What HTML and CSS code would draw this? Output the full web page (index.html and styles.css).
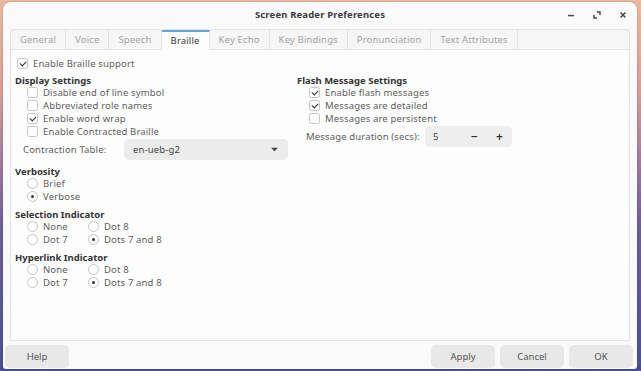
FILE: index.html
```
<!DOCTYPE html>
<html lang="en">
<head>
  <meta charset="UTF-8" />
  <title>Screen Reader Preferences</title>
  <link rel="stylesheet" href="styles.css">
</head>
<body>
  <div class="window">
    <div class="titlebar">
      <span></span>
      <h1>Screen Reader Preferences</h1>
      <div class="controls">
        <svg class="ctl" viewBox="0 0 10 10"><path d="M2.5 5.5h5" /></svg>
        <svg class="ctl" viewBox="0 0 10 10"><path d="M2.5 5v2.5h2.5M5 2.5h2.5v2.5" /></svg>
        <svg class="ctl" viewBox="0 0 10 10"><path d="M3 3l4 4M7 3l-4 4" /></svg>
      </div>
    </div>

    <div class="tabs">
      <div class="tab">General</div>
      <div class="tab">Voice</div>
      <div class="tab">Speech</div>
      <div class="tab active">Braille</div>
      <div class="tab">Key Echo</div>
      <div class="tab">Key Bindings</div>
      <div class="tab">Pronunciation</div>
      <div class="tab">Text Attributes</div>
      <div class="tab-fill"></div>
    </div>

    <div class="page">
      <label class="row top-check"><span class="check on"></span>Enable Braille support</label>

      <div class="columns">
        <div class="col">
          <h2>Display Settings</h2>
          <div class="group">
            <label class="row"><span class="check"></span>Disable end of line symbol</label>
            <label class="row"><span class="check"></span>Abbreviated role names</label>
            <label class="row"><span class="check on"></span>Enable word wrap</label>
            <label class="row"><span class="check"></span>Enable Contracted Braille</label>
          </div>
          <div class="combo-row">
            <span class="combo-label">Contraction Table:</span>
            <div class="combo">
              <span>en-ueb-g2</span>
              <svg viewBox="0 0 8 8"><path d="M1 2.5h6L4 5.5z" /></svg>
            </div>
          </div>

          <h2 class="spaced">Verbosity</h2>
          <div class="group">
            <label class="row"><span class="radio"></span>Brief</label>
            <label class="row"><span class="radio on"></span>Verbose</label>
          </div>

          <h2 class="spaced">Selection Indicator</h2>
          <div class="group radios">
            <label class="row"><span class="radio"></span>None</label>
            <label class="row"><span class="radio"></span>Dot 8</label>
            <label class="row"><span class="radio"></span>Dot 7</label>
            <label class="row"><span class="radio on"></span>Dots 7 and 8</label>
          </div>

          <h2 class="spaced">Hyperlink Indicator</h2>
          <div class="group radios">
            <label class="row"><span class="radio"></span>None</label>
            <label class="row"><span class="radio"></span>Dot 8</label>
            <label class="row"><span class="radio"></span>Dot 7</label>
            <label class="row"><span class="radio on"></span>Dots 7 and 8</label>
          </div>
        </div>

        <div class="col">
          <h2>Flash Message Settings</h2>
          <div class="group">
            <label class="row"><span class="check on"></span>Enable flash messages</label>
            <label class="row"><span class="check on"></span>Messages are detailed</label>
            <label class="row"><span class="check"></span>Messages are persistent</label>
          </div>
          <div class="spin-row">
            <span class="spin-label">Message duration (secs):</span>
            <div class="spin">
              <span class="spin-value">5</span>
              <span class="spin-btn">&minus;</span>
              <span class="spin-btn">+</span>
            </div>
          </div>
        </div>
      </div>
    </div>

    <div class="actions">
      <button>Help</button>
      <span class="spacer"></span>
      <button>Apply</button>
      <button>Cancel</button>
      <button>OK</button>
    </div>
  </div>
</body>
</html>
```

FILE: styles.css
```
/* Reset & base */
* { box-sizing: border-box; margin: 0; padding: 0; }
html, body { height: 100%; }
body {
  font-family: 'Noto Sans', 'DejaVu Sans', sans-serif;
  font-size: 9.5px;
  letter-spacing: 0.15px;
  color: #5e5e5e;
  background: linear-gradient(to bottom, #ebb9a2 0%, #d79c95 25%, #6d5f9c 60%, #4b4f8f 100%);
  overflow: hidden;
}

/* Window frame */
.window {
  display: flex; flex-direction: column;
  height: 367px;
  margin: 2px 4px 0 3px;
  background: #fafafa;
  border-radius: 8px 8px 3px 3px;
  box-shadow: 0 0 0 1px rgba(0,0,0,0.08);
}

/* Title bar */
.titlebar {
  display: grid; grid-template-columns: 1fr auto 1fr;
  align-items: center;
  height: 27px;
  padding-bottom: 2px;
}
.titlebar h1 { font-size: 9.5px; font-weight: 700; color: #3a3a3a; }
.controls { display: flex; justify-content: flex-end; gap: 14px; padding-right: 8px; }
.ctl { width: 12px; height: 12px; fill: none; stroke: #444; stroke-width: 1.2; }

/* Tabs */
.tabs {
  display: flex; height: 21px;
  margin: 0 7px;
  border: 1px solid #e4e4e4; border-bottom: none;
  border-radius: 4px 4px 0 0;
  background: #f6f6f6;
}
.tab {
  display: flex; align-items: center;
  padding: 0 9px;
  color: #a3a3a3;
  border-right: 1px solid #e4e4e4;
  border-bottom: 1px solid #e4e4e4;
}
.tab.active {
  color: #3c3c3c; background: #fdfdfd;
  border-top: 2px solid #62a3e3;
  border-bottom-color: transparent;
}
.tab-fill { flex: 1; border-bottom: 1px solid #e4e4e4; }

/* Notebook page */
.page {
  flex: 1;
  margin: 0 7px;
  padding: 7px 4px 0;
  background: #fdfdfd;
  border: 1px solid #e4e4e4; border-top: none;
}
.columns { display: grid; grid-template-columns: 282px 1fr; margin-top: 5px; }

h2 { font-size: 9.5px; font-weight: 700; color: #333; line-height: 11px; letter-spacing: 0; }
h2.spaced { margin-top: 6px; }

.group { padding-left: 12px; }
.radios { display: grid; grid-template-columns: 61px auto; }

.row { display: flex; align-items: center; gap: 5px; height: 13px; white-space: nowrap; }
.top-check { margin-left: 2px; }

/* Checkbox & radio */
.check, .radio {
  flex: none; width: 11px; height: 11px;
  border: 1px solid #c4c4c4; background: #fff;
  position: relative;
}
.check { border-radius: 2.5px; }
.check.on::after {
  content: ''; position: absolute; left: 3px; top: 1px;
  width: 3px; height: 5px;
  border: solid #2e2e2e; border-width: 0 1.6px 1.6px 0;
  transform: rotate(45deg);
}
.radio { border-radius: 50%; }
.radio.on::after {
  content: ''; position: absolute; left: 3px; top: 3px;
  width: 3px; height: 3px; border-radius: 50%; background: #333;
}

/* Combo box */
.combo-row { display: flex; align-items: center; padding-left: 8px; margin-top: 1px; }
.combo-label { width: 101px; }
.combo {
  display: flex; align-items: center; justify-content: space-between;
  width: 164px; height: 21px;
  padding: 0 9px;
  background: #ececec; border-radius: 5px;
  color: #444;
}
.combo svg { width: 9px; height: 9px; fill: #444; }

/* Spin button */
.spin-row { display: flex; align-items: center; padding-left: 9px; margin-top: 1px; }
.spin-label { width: 119px; }
.spin {
  display: flex; align-items: center;
  width: 87px; height: 21px;
  background: #eeeeee; border-radius: 5px;
  padding-left: 8px;
}
.spin-value { flex: 1; color: #444; }
.spin-btn { width: 25px; text-align: center; font-size: 12px; color: #333; font-weight: 600; }

/* Action buttons */
.actions { display: flex; gap: 5px; padding: 4px 4px 1px 2px; }
.spacer { flex: 1; }
button {
  font: inherit; color: #555;
  width: 64px; height: 23px;
  border: none; border-radius: 5px;
  background: #e8e8e8;
}
```
